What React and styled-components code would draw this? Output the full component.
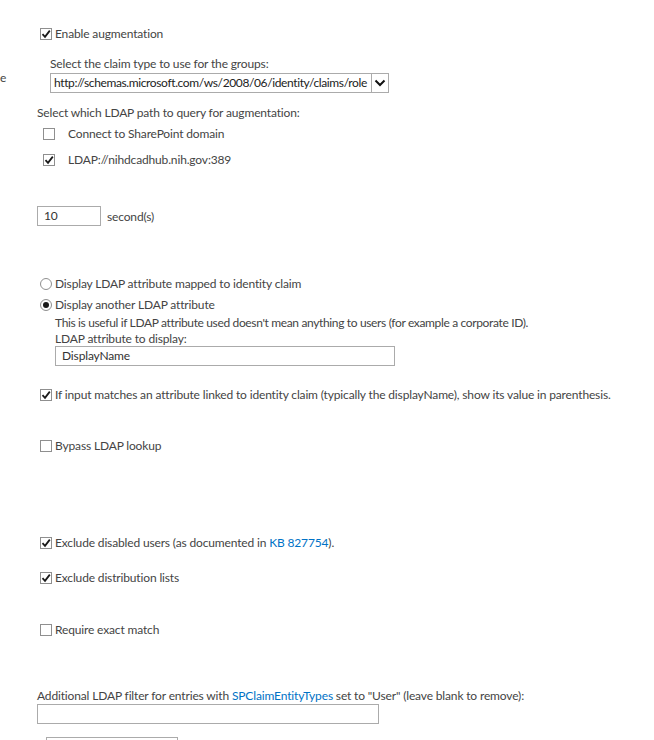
import React from "react";
import styled, { createGlobalStyle } from "styled-components";

const GlobalStyle = createGlobalStyle`
  html, body {
    margin: 0;
    padding: 0;
    background: #ffffff;
  }
  body {
    font-family: Lato, "Liberation Sans", sans-serif;
    font-size: 12px;
    letter-spacing: -0.15px;
    color: #444444;
  }
`;

const Page = styled.div`
  display: flex;
  width: 654px;
  height: 740px;
  overflow: hidden;
  background: #fff;
`;

const LeftCol = styled.div`
  flex: none;
  width: 6px;
  padding-top: 70px;
  white-space: nowrap;
`;

const Main = styled.div`
  flex: 1;
  min-width: 0;
  padding-left: 31px;
  padding-top: 26px;
`;

const Block = styled.div`
  margin-top: ${(p) => p.$mt || 0}px;
  padding-left: ${(p) => p.$pl || 0}px;
  padding-top: ${(p) => p.$pt || 0}px;
`;

const Line = styled.div`
  line-height: ${(p) => p.$lh || 16}px;
  letter-spacing: ${(p) => (p.$tight ? "-0.35px" : "inherit")};
  white-space: nowrap;
`;

const Row = styled.label`
  display: flex;
  align-items: center;
  gap: ${(p) => p.$gap || 3}px;
  line-height: 16px;
  white-space: nowrap;
`;

const Box = styled.span`
  box-sizing: border-box;
  width: 12px;
  height: 12px;
  border: 1px solid #8f8f8f;
  background: #fff;
  display: inline-flex;
  align-items: center;
  justify-content: center;
  flex: none;
`;

const Radio = styled.span`
  box-sizing: border-box;
  width: 12px;
  height: 12px;
  border-radius: 50%;
  border: 1px solid #8f8f8f;
  background: #fff;
  display: inline-flex;
  align-items: center;
  justify-content: center;
  flex: none;
  &::after {
    content: "";
    width: 6px;
    height: 6px;
    border-radius: 50%;
    background: ${(p) => (p.$on ? "#1a1a1a" : "transparent")};
  }
`;

const TextBox = styled.div`
  box-sizing: border-box;
  width: ${(p) => p.$w}px;
  height: 20px;
  border: 1px solid #ababab;
  background: #fff;
  padding-left: 6px;
  line-height: 18px;
  color: #333;
  white-space: nowrap;
  overflow: hidden;
`;

const Select = styled.div`
  box-sizing: border-box;
  width: 339px;
  height: 20px;
  border: 1px solid #ababab;
  display: flex;
  align-items: stretch;
  background: #fff;
`;

const SelectText = styled.div`
  flex: 1;
  min-width: 0;
  padding-left: 3px;
  line-height: 18px;
  letter-spacing: -0.38px;
  color: #222;
  white-space: nowrap;
  overflow: hidden;
`;

const SelectBtn = styled.div`
  width: 16px;
  border-left: 1px solid #ababab;
  display: flex;
  align-items: center;
  justify-content: center;
`;

const InlineRow = styled.div`
  display: flex;
  align-items: center;
  gap: 6px;
`;

const Link = styled.a`
  color: #0072c6;
  text-decoration: none;
`;

const Check = () => (
  <svg width="10" height="10" viewBox="0 0 10 10">
    <path d="M1.5 5.2 L4 7.8 L8.8 1.6" fill="none" stroke="#1a1a1a" strokeWidth="1.8" />
  </svg>
);

const CheckBox = ({ on }) => <Box>{on && <Check />}</Box>;

const App = () => {
  return (
    <>
      <GlobalStyle />
      <Page>
        <LeftCol>e</LeftCol>
        <Main>
          <Block $pl={3}>
            <Row>
              <CheckBox on />
              Enable augmentation
            </Row>
          </Block>

          <Block $mt={14} $pl={13}>
            <Line>Select the claim type to use for the groups:</Line>
            <Block $mt={1}>
              <Select>
                <SelectText>http://schemas.microsoft.com/ws/2008/06/identity/claims/role</SelectText>
                <SelectBtn>
                  <svg width="12" height="8" viewBox="0 0 12 8">
                    <path d="M1.5 1.5 L6 6 L10.5 1.5" fill="none" stroke="#111" strokeWidth="2" />
                  </svg>
                </SelectBtn>
              </Select>
            </Block>
          </Block>

          <Block $mt={12}>
            <Line>Select which LDAP path to query for augmentation:</Line>
          </Block>
          <Block $mt={5} $pl={6}>
            <Row $gap={13}>
              <CheckBox />
              Connect to SharePoint domain
            </Row>
          </Block>
          <Block $mt={10} $pl={6}>
            <Row $gap={13}>
              <CheckBox on />
              LDAP://nihdcadhub.nih.gov:389
            </Row>
          </Block>

          <Block $mt={38}>
            <InlineRow>
              <TextBox $w={64}>10</TextBox>
              <span>second(s)</span>
            </InlineRow>
          </Block>

          <Block $mt={50} $pl={3}>
            <Row>
              <Radio />
              Display LDAP attribute mapped to identity claim
            </Row>
          </Block>
          <Block $mt={5} $pl={3}>
            <Row>
              <Radio $on />
              Display another LDAP attribute
            </Row>
          </Block>
          <Block $pl={18} $pt={2}>
            <Line $tight>
              This is useful if LDAP attribute used doesn't mean anything to users (for example a corporate ID).
            </Line>
            <Line $lh={15}>LDAP attribute to display:</Line>
            <TextBox $w={340}>DisplayName</TextBox>
          </Block>

          <Block $mt={21} $pl={3}>
            <Row>
              <CheckBox on />
              If input matches an attribute linked to identity claim (typically the displayName), show its value in
              parenthesis.
            </Row>
          </Block>

          <Block $mt={35} $pl={3}>
            <Row>
              <CheckBox />
              Bypass LDAP lookup
            </Row>
          </Block>

          <Block $mt={81} $pl={3}>
            <Row>
              <CheckBox on />
              <span>
                Exclude disabled users (as documented in <Link href="#">KB 827754</Link>).
              </span>
            </Row>
          </Block>
          <Block $mt={19} $pl={3}>
            <Row>
              <CheckBox on />
              Exclude distribution lists
            </Row>
          </Block>
          <Block $mt={36} $pl={3}>
            <Row>
              <CheckBox />
              Require exact match
            </Row>
          </Block>

          <Block $mt={50}>
            <Line>
              Additional LDAP filter for entries with <Link href="#">SPClaimEntityTypes</Link> set to "User" (leave
              blank to remove):
            </Line>
            <TextBox $w={342} />
          </Block>
          <Block $mt={13} $pl={9}>
            <TextBox $w={132} />
          </Block>
        </Main>
      </Page>
    </>
  );
};

export default App;
